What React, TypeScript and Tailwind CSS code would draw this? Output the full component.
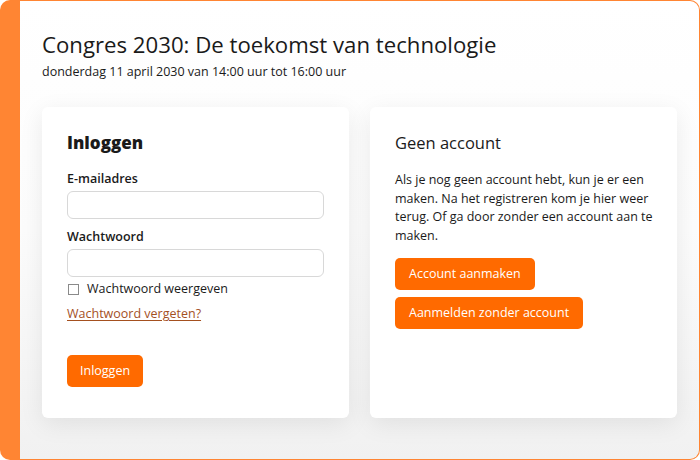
export default function App() {
  return (
    <div className="h-[460px] w-[700px] rounded-[10px] bg-[#ff8533] pt-px pr-px pb-px pl-[20px] font-['Open_Sans',sans-serif] text-[#1a1a1a]">
      <div className="flex h-full flex-col rounded-r-[9px] bg-linear-to-b from-white via-[#fcfcfc] to-[#f1f1f1] px-[22px] pt-[29px]">
        <h1 className="text-[22.2px] leading-[30px]">Congres 2030: De toekomst van technologie</h1>
        <p className="mt-[3px] text-[12.5px] leading-[18px]">
          donderdag 11 april 2030 van 14:00 uur tot 16:00 uur
        </p>

        <div className="mt-[26px] grid h-[311px] grid-cols-2 gap-[21px]">
          <div className="flex flex-col rounded-[6px] bg-white px-[25px] pt-[24px] shadow-[0_6px_24px_rgba(0,0,0,0.08)]">
            <h2 className="text-[17px] leading-[24px] font-extrabold">Inloggen</h2>
            <label className="mt-[15px] text-[12.5px] leading-[18px] font-semibold">E-mailadres</label>
            <input
              type="email"
              className="mt-[3px] h-[28px] w-full rounded-[6px] border border-[#d8d8d8] bg-white px-2 text-[13px]"
            />
            <label className="mt-[9px] text-[12.5px] leading-[18px] font-semibold">Wachtwoord</label>
            <input
              type="password"
              className="mt-[3px] h-[28px] w-full rounded-[6px] border border-[#d8d8d8] bg-white px-2 text-[13px]"
            />
            <label className="mt-[3px] flex items-center gap-[8px] text-[12.5px] leading-[18px]">
              <span className="ml-px h-[11px] w-[11px] border border-[#8a8a8a] bg-white" />
              Wachtwoord weergeven
            </label>
            <a href="#" className="mt-[7px] self-start text-[12.5px] leading-[18px] text-[#a4501f] underline underline-offset-2">
              Wachtwoord vergeten?
            </a>
            <button className="mt-[32px] h-[32px] self-start rounded-[5px] bg-[#ff6a00] px-[13px] text-[12.5px] text-white">
              Inloggen
            </button>
          </div>

          <div className="flex flex-col rounded-[6px] bg-white pt-[24px] pr-[22px] pl-[25px] shadow-[0_6px_24px_rgba(0,0,0,0.08)]">
            <h2 className="text-[16.5px] leading-[24px]">Geen account</h2>
            <p className="mt-[16px] text-[12.5px] leading-[18.5px]">
              Als je nog geen account hebt, kun je er een maken. Na het registreren kom je hier weer terug. Of ga door zonder een account aan te maken.
            </p>
            <div className="mt-[13px] flex flex-col items-start gap-[7px]">
              <button className="h-[32px] rounded-[5px] bg-[#ff6a00] px-[14px] text-[12.5px] text-white">
                Account aanmaken
              </button>
              <button className="h-[32px] rounded-[5px] bg-[#ff6a00] px-[14px] text-[12.5px] text-white">
                Aanmelden zonder account
              </button>
            </div>
          </div>
        </div>
      </div>
    </div>
  );
}
